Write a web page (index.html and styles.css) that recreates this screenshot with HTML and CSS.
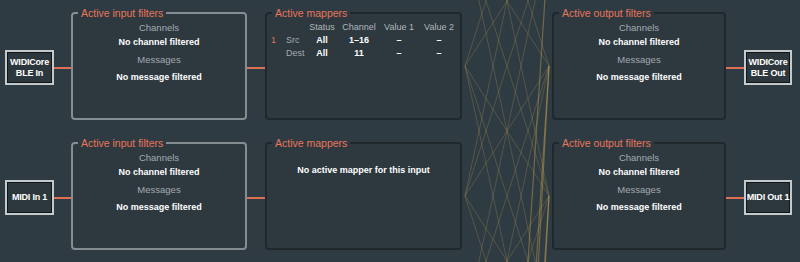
FILE: index.html
```html
<!DOCTYPE html>
<html lang="en">
<head>
    <meta charset="UTF-8">
    <title>Routing</title>
    <link rel="stylesheet" href="styles.css">
</head>
<body>
    <div class="graph">
        <!-- links between mappers and output filters -->
        <svg class="wires" width="90" height="262" viewBox="0 0 90 262">
            <g stroke="rgba(176,150,86,0.3)" stroke-width="1" fill="none">
                <line x1="3" y1="-194" x2="87" y2="66"/>
                <line x1="3" y1="-194" x2="87" y2="196"/>
                <line x1="3" y1="-64" x2="87" y2="66"/>
                <line x1="3" y1="-64" x2="87" y2="196"/>
                <line x1="3" y1="-64" x2="87" y2="326"/>
                <line x1="3" y1="66" x2="87" y2="-194"/>
                <line x1="3" y1="66" x2="87" y2="-64"/>
                <line x1="3" y1="66" x2="87" y2="196"/>
                <line x1="3" y1="66" x2="87" y2="326"/>
                <line x1="3" y1="66" x2="87" y2="456"/>
                <line x1="3" y1="196" x2="87" y2="-194"/>
                <line x1="3" y1="196" x2="87" y2="-64"/>
                <line x1="3" y1="196" x2="87" y2="66"/>
                <line x1="3" y1="196" x2="87" y2="326"/>
                <line x1="3" y1="196" x2="87" y2="456"/>
                <line x1="3" y1="326" x2="87" y2="-64"/>
                <line x1="3" y1="326" x2="87" y2="66"/>
                <line x1="3" y1="326" x2="87" y2="196"/>
                <line x1="3" y1="456" x2="87" y2="66"/>
                <line x1="3" y1="456" x2="87" y2="196"/>
            </g>
            <g stroke="rgba(200,162,80,0.45)" stroke-width="1.2" fill="none">
                <line x1="3" y1="1366" x2="87" y2="66"/>
                <line x1="3" y1="1626" x2="87" y2="66"/>
                <line x1="3" y1="1496" x2="87" y2="196"/>
                <line x1="3" y1="1756" x2="87" y2="196"/>
                <line x1="3" y1="1236" x2="87" y2="-64"/>
            </g>
        </svg>

        <div class="row">
            <div class="node">WIDICore<br>BLE In</div>
            <div class="link link-in"></div>
            <fieldset class="box input-box">
                <legend>Active input filters</legend>
                <div class="label">Channels</div>
                <div class="value">No channel filtered</div>
                <div class="label label-gap">Messages</div>
                <div class="value">No message filtered</div>
            </fieldset>
            <div class="link link-mid"></div>
            <fieldset class="box mapper-box">
                <legend>Active mappers</legend>
                <div class="map-table">
                    <div class="head"></div>
                    <div class="head"></div>
                    <div class="head">Status</div>
                    <div class="head">Channel</div>
                    <div class="head">Value 1</div>
                    <div class="head">Value 2</div>

                    <div class="idx">1</div>
                    <div class="role">Src</div>
                    <div class="cell">All</div>
                    <div class="cell">1–16</div>
                    <div class="cell">–</div>
                    <div class="cell">–</div>

                    <div class="idx"></div>
                    <div class="role">Dest</div>
                    <div class="cell">All</div>
                    <div class="cell">11</div>
                    <div class="cell">–</div>
                    <div class="cell">–</div>
                </div>
            </fieldset>
            <div class="gap"></div>
            <fieldset class="box output-box">
                <legend>Active output filters</legend>
                <div class="label">Channels</div>
                <div class="value">No channel filtered</div>
                <div class="label label-gap">Messages</div>
                <div class="value">No message filtered</div>
            </fieldset>
            <div class="link link-out"></div>
            <div class="node node-out">WIDICore<br>BLE Out</div>
        </div>

        <div class="row">
            <div class="node">MIDI In 1</div>
            <div class="link link-in"></div>
            <fieldset class="box input-box">
                <legend>Active input filters</legend>
                <div class="label">Channels</div>
                <div class="value">No channel filtered</div>
                <div class="label label-gap">Messages</div>
                <div class="value">No message filtered</div>
            </fieldset>
            <div class="link link-mid"></div>
            <fieldset class="box mapper-box">
                <legend>Active mappers</legend>
                <div class="empty">No active mapper for this input</div>
            </fieldset>
            <div class="gap"></div>
            <fieldset class="box output-box">
                <legend>Active output filters</legend>
                <div class="label">Channels</div>
                <div class="value">No channel filtered</div>
                <div class="label label-gap">Messages</div>
                <div class="value">No message filtered</div>
            </fieldset>
            <div class="link link-out"></div>
            <div class="node node-out">MIDI Out 1</div>
        </div>
    </div>
</body>
</html>
```

FILE: styles.css
```css
body {
    margin: 0;
    background-color: #2f3b42;
    color: #ffffff;
    font-family: "Liberation Sans", Arial, sans-serif;
    overflow: hidden;
}

.graph {
    position: relative;
    height: 262px;
    box-sizing: border-box;
    padding: 7px 0 0 5px;
    display: flex;
    flex-direction: column;
    gap: 17px;
}

/* wires overlay between mappers and outputs */
.wires {
    position: absolute;
    left: 462px;
    top: 0;
}

.row {
    display: flex;
    align-items: center;
    height: 113px;
}

/* device nodes */
.node {
    width: 49px;
    height: 35px;
    box-sizing: border-box;
    margin-top: 8px;
    border: 2px solid #c4c9cc;
    box-shadow: inset 0 0 0 1px #111619;
    background-color: #2d383e;
    display: flex;
    align-items: center;
    justify-content: center;
    text-align: center;
    font-size: 9px;
    font-weight: bold;
    line-height: 11px;
    letter-spacing: -0.2px;
    white-space: nowrap;
}

.node-out {
    width: 48px;
}

.link {
    height: 2px;
    margin-top: 8px;
    background-color: #df6f56;
}

.link-in {
    width: 17px;
}

.link-mid,
.link-out {
    width: 18px;
}

.gap {
    width: 90px;
}

/* boxes */
.box {
    margin: 0;
    padding: 2px 0 0;
    min-width: 0;
    height: 113px;
    box-sizing: border-box;
    border: 2px solid #1f282d;
    border-radius: 4px;
    background-color: #2d383f;
}

.box legend {
    margin-left: 5px;
    padding: 0 3px;
    color: #e8765c;
    font-size: 10.5px;
    line-height: 12px;
}

.input-box {
    width: 176px;
    border-color: #848d91;
}

.mapper-box {
    width: 197px;
    padding-top: 1px;
}

.output-box {
    width: 174px;
}

.label {
    color: #a4acb0;
    font-size: 9.5px;
    line-height: 14px;
    text-align: center;
}

.label-gap {
    margin-top: 4px;
    margin-bottom: 3px;
}

.value {
    font-size: 9px;
    font-weight: bold;
    line-height: 14px;
    text-align: center;
    white-space: nowrap;
}

/* mapper table */
.map-table {
    display: grid;
    grid-template-columns: 13px 26px 32px 42px 38px 42px;
    font-size: 9px;
    line-height: 13px;
    white-space: nowrap;
}

.head {
    color: #b0b7bb;
    text-align: center;
    line-height: 14px;
}

.idx {
    color: #e0735a;
    text-align: center;
}

.role {
    color: #a4acb0;
    padding-left: 6px;
}

.cell {
    font-weight: bold;
    text-align: center;
}

.empty {
    margin-top: 13px;
    font-size: 9px;
    font-weight: bold;
    line-height: 14px;
    text-align: center;
}
```
